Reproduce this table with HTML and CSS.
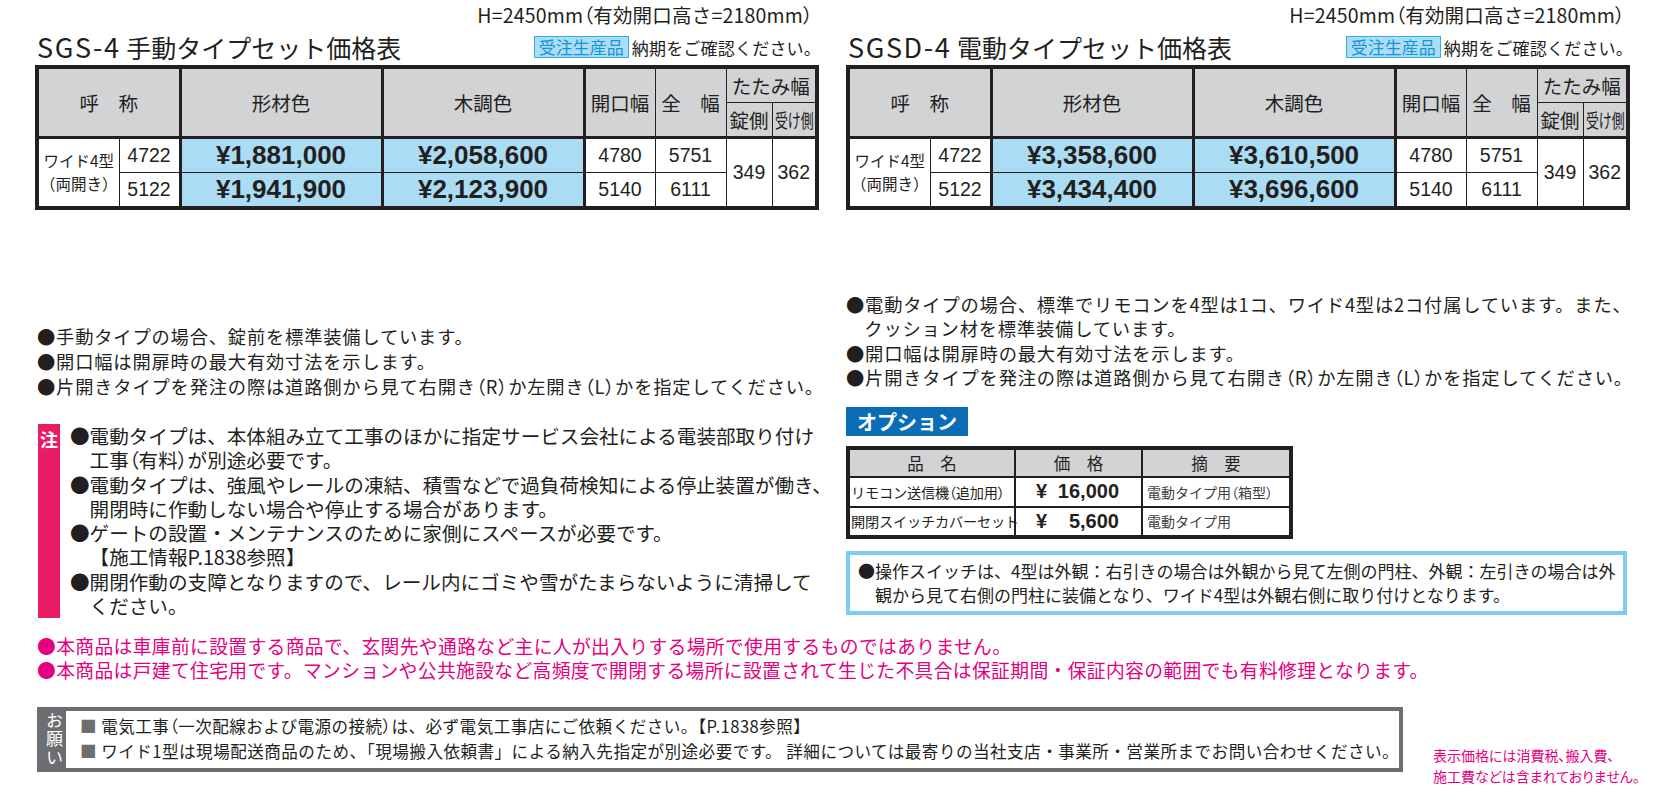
FILE: index.html
```html
<!DOCTYPE html>
<html lang="ja">
<head>
<meta charset="utf-8">
<title>SGS-4 / SGSD-4 セット価格表</title>
<link rel="stylesheet" href="styles.css">
</head>
<body>
<div class="page">
  <div class="cols">
    <section class="col">
      <div class="spec">H=2450mm<span class="pp">（</span>有効開口高さ=2180mm<span class="pp">）</span></div>
      <div class="titlerow">
        <h1 class="title"><span class="lat">SGS-4</span> 手動タイプセット価格表</h1>
        <div class="order"><span class="badge">受注生産品</span><span class="order-text">納期をご確認ください。</span></div>
      </div>
      <table class="price">
        <colgroup>
          <col class="c1"><col class="c2"><col class="c3"><col class="c4"><col class="c5"><col class="c6"><col class="c7"><col class="c8">
        </colgroup>
        <thead>
          <tr class="hr1">
            <th colspan="2" rowspan="2" class="sep">呼　称</th>
            <th rowspan="2" class="sep">形材色</th>
            <th rowspan="2" class="sep">木調色</th>
            <th rowspan="2">開口幅</th>
            <th rowspan="2">全　幅</th>
            <th colspan="2" class="sub">たたみ幅</th>
          </tr>
          <tr class="hr2">
            <th>錠側</th>
            <th><span class="squeeze">受け側</span></th>
          </tr>
        </thead>
        <tbody>
          <tr>
            <td rowspan="2" class="model">ワイド4型<br>（両開き）</td>
            <td class="num sep">4722</td>
            <td class="yen sep">¥1,881,000</td>
            <td class="yen sep">¥2,058,600</td>
            <td class="num">4780</td>
            <td class="num">5751</td>
            <td rowspan="2" class="num">349</td>
            <td rowspan="2" class="num">362</td>
          </tr>
          <tr>
            <td class="num sep">5122</td>
            <td class="yen sep">¥1,941,900</td>
            <td class="yen sep">¥2,123,900</td>
            <td class="num">5140</td>
            <td class="num">6111</td>
          </tr>
        </tbody>
      </table>

      <div class="notes notes-left">
        <p>●手動タイプの場合、錠前を標準装備しています。</p>
        <p>●開口幅は開扉時の最大有効寸法を示します。</p>
        <p>●片開きタイプを発注の際は道路側から見て右開き<span class="pp">（R）</span>か左開き<span class="pp">（L）</span>かを指定してください。</p>
      </div>

      <div class="caution">
        <div class="caution-mark">注</div>
        <div class="caution-body">
          <p>●電動タイプは、本体組み立て工事のほかに指定サービス会社による電装部取り付け<br>工事<span class="pp">（</span>有料<span class="pp">）</span>が別途必要です。</p>
          <p>●電動タイプは、強風やレールの凍結、積雪などで過負荷検知による停止装置が働き、<br>開閉時に作動しない場合や停止する場合があります。</p>
          <p>●ゲートの設置・メンテナンスのために家側にスペースが必要です。<br>【施工情報P.1838参照】</p>
          <p>●開閉作動の支障となりますので、レール内にゴミや雪がたまらないように清掃して<br>ください。</p>
        </div>
      </div>
    </section>

    <section class="col">
      <div class="spec">H=2450mm<span class="pp">（</span>有効開口高さ=2180mm<span class="pp">）</span></div>
      <div class="titlerow">
        <h1 class="title"><span class="lat">SGSD-4</span> 電動タイプセット価格表</h1>
        <div class="order"><span class="badge">受注生産品</span><span class="order-text">納期をご確認ください。</span></div>
      </div>
      <table class="price">
        <colgroup>
          <col class="c1"><col class="c2"><col class="c3"><col class="c4"><col class="c5"><col class="c6"><col class="c7"><col class="c8">
        </colgroup>
        <thead>
          <tr class="hr1">
            <th colspan="2" rowspan="2" class="sep">呼　称</th>
            <th rowspan="2" class="sep">形材色</th>
            <th rowspan="2" class="sep">木調色</th>
            <th rowspan="2">開口幅</th>
            <th rowspan="2">全　幅</th>
            <th colspan="2" class="sub">たたみ幅</th>
          </tr>
          <tr class="hr2">
            <th>錠側</th>
            <th><span class="squeeze">受け側</span></th>
          </tr>
        </thead>
        <tbody>
          <tr>
            <td rowspan="2" class="model">ワイド4型<br>（両開き）</td>
            <td class="num sep">4722</td>
            <td class="yen sep">¥3,358,600</td>
            <td class="yen sep">¥3,610,500</td>
            <td class="num">4780</td>
            <td class="num">5751</td>
            <td rowspan="2" class="num">349</td>
            <td rowspan="2" class="num">362</td>
          </tr>
          <tr>
            <td class="num sep">5122</td>
            <td class="yen sep">¥3,434,400</td>
            <td class="yen sep">¥3,696,600</td>
            <td class="num">5140</td>
            <td class="num">6111</td>
          </tr>
        </tbody>
      </table>

      <div class="notes notes-right">
        <p>●電動タイプの場合、標準でリモコンを4型は1コ、ワイド4型は2コ付属しています。また、<br>クッション材を標準装備しています。</p>
        <p>●開口幅は開扉時の最大有効寸法を示します。</p>
        <p>●片開きタイプを発注の際は道路側から見て右開き<span class="pp">（R）</span>か左開き<span class="pp">（L）</span>かを指定してください。</p>
      </div>

      <div class="opt-label">オプション</div>
      <table class="opt">
        <colgroup><col class="o1"><col class="o2"><col class="o3"></colgroup>
        <thead>
          <tr><th>品　名</th><th>価　格</th><th>摘　要</th></tr>
        </thead>
        <tbody>
          <tr>
            <td class="oname">リモコン送信機<span class="pp">（</span>追加用<span class="pp">）</span></td>
            <td><div class="oprice"><span>¥</span><span>16,000</span></div></td>
            <td class="onote">電動タイプ用<span class="pp">（</span>箱型<span class="pp">）</span></td>
          </tr>
          <tr>
            <td class="oname">開閉スイッチカバーセット</td>
            <td><div class="oprice"><span>¥</span><span>5,600</span></div></td>
            <td class="onote">電動タイプ用</td>
          </tr>
        </tbody>
      </table>

      <div class="bluenote">
        <p>●操作スイッチは、4型は外観：右引きの場合は外観から見て左側の門柱、外観：左引きの場合は外<br>観から見て右側の門柱に装備となり、ワイド4型は外観右側に取り付けとなります。</p>
      </div>
    </section>
  </div>

  <div class="bottom">
    <div class="pink">
      <p>●本商品は車庫前に設置する商品で、玄関先や通路など主に人が出入りする場所で使用するものではありません。</p>
      <p>●本商品は戸建て住宅用です。マンションや公共施設など高頻度で開閉する場所に設置されて生じた不具合は保証期間・保証内容の範囲でも有料修理となります。</p>
    </div>
    <div class="request-row">
      <div class="request">
        <div class="request-label">お願い</div>
        <div class="request-body">
          <p><span class="sq">■</span> 電気工事<span class="pp">（</span>一次配線および電源の接続<span class="pp">）</span>は、必ず電気工事店にご依頼ください。【P.1838参照】</p>
          <p><span class="sq">■</span> ワイド1型は現場配送商品のため、「現場搬入依頼書」による納入先指定が別途必要です。 詳細については最寄りの当社支店・事業所・営業所までお問い合わせください。</p>
        </div>
      </div>
      <div class="taxnote">表示価格には消費税、搬入費、<br>施工費などは含まれておりません。</div>
    </div>
  </div>
</div>
</body>
</html>
```

FILE: styles.css
```css
* { box-sizing: border-box; }
html, body { margin: 0; padding: 0; }
body {
  width: 1660px;
  height: 800px;
  overflow: hidden;
  background: #ffffff;
  color: #231f20;
  font-family: "Noto Sans CJK JP", "Noto Sans", sans-serif;
}
p { margin: 0; }

/* proportional (narrow) brackets, as in the printed typeface */
.pp { font-feature-settings: "palt" 1; }

.page { padding: 4px 0 0 35px; }

.cols {
  display: grid;
  grid-template-columns: 780px 781px;
  column-gap: 31px;
  align-items: start;
}
.col { display: flex; flex-direction: column; }

/* heading */
.spec {
  font-size: 19.5px;
  line-height: 22px;
  text-align: right;
  padding-right: 2px;
  white-space: nowrap;
  letter-spacing: 0.2px;
}
.titlerow {
  display: flex;
  justify-content: space-between;
  align-items: center;
  height: 34px;
  margin-top: 4px;
}
.title {
  margin: 0 0 0 2px;
  font-size: 25px;
  font-weight: 400;
  line-height: 34px;
  white-space: nowrap;
}
.title .lat { letter-spacing: 1.6px; font-size: 27px; }
.order { display: flex; align-items: center; white-space: nowrap; }
.badge {
  background: #a9def6;
  border: 1.5px solid #2eaee3;
  color: #1a93d2;
  font-size: 17px;
  line-height: 20px;
  padding: 0 4px;
}
.order-text { font-size: 17px; margin-left: 3px; letter-spacing: 0.2px; margin-right: -6px; }

/* price table */
.price {
  width: 100%;
  border-collapse: collapse;
  table-layout: fixed;
  border: 4px solid #231f20;
  margin-top: 1px;
}
.price .c1 { width: 82px; }
.price .c2 { width: 61px; }
.price .c3 { width: 202px; }
.price .c4 { width: 202px; }
.price .c5 { width: 71px; }
.price .c6 { width: 71px; }
.price .c7 { width: 46px; }
.price .c8 { width: 45px; }
.price th, .price td {
  border: 1px solid #231f20;
  padding: 0;
  text-align: center;
  vertical-align: middle;
  white-space: nowrap;
}
.price th {
  background: #d1d3d4;
  font-weight: 400;
  font-size: 19.5px;
  border-bottom: 3px solid #231f20;
}
.price th.sub { border-bottom-width: 1px; }
.price .sep { border-right: 3px solid #231f20; }
.price .hr1 { height: 35px; }
.price .hr2 { height: 35px; }
.price tbody tr { height: 35.5px; }
.squeeze {
  display: inline-block;
  transform: scaleX(0.66);
  margin: 0 -10px;
}
.price .model {
  font-size: 15.5px;
  line-height: 23px;
}
.price .num {
  font-family: "Liberation Sans", Arial, sans-serif;
  font-size: 19.5px;
}
.price .yen {
  background: #aadcf3;
  font-family: "Liberation Sans", Arial, sans-serif;
  font-weight: 700;
  font-size: 26px;
}

/* notes */
.notes { font-size: 18.3px; white-space: nowrap; letter-spacing: 0.8px; }
.notes p { padding-left: 1em; text-indent: -1em; }
.notes-left { margin-top: 114px; padding-left: 2px; line-height: 25px; }
.notes-right { margin-top: 82px; line-height: 24.4px; }

.caution { display: flex; margin-top: 25px; margin-left: 3px; }
.caution-mark {
  width: 22px;
  flex: 0 0 22px;
  background: #ea1b67;
  color: #ffffff;
  font-weight: 700;
  font-size: 18px;
  line-height: 24px;
  text-align: center;
  padding-top: 3px;
}
.caution-body {
  margin-left: 10px;
  font-size: 19.6px;
  line-height: 24.3px;
  white-space: nowrap;
}
.caution-body p { padding-left: 1em; text-indent: -1em; }

/* options */
.opt-label {
  align-self: flex-start;
  margin-top: 17px;
  height: 29px;
  line-height: 29px;
  padding: 0 11px;
  background: #0b6db6;
  color: #ffffff;
  font-weight: 700;
  font-size: 20px;
}
.opt {
  margin-top: 10px;
  width: 443px;
  border-collapse: collapse;
  table-layout: fixed;
  border: 4px solid #231f20;
}
.opt .o1 { width: 167px; }
.opt .o2 { width: 127px; }
.opt .o3 { width: 149px; }
.opt th, .opt td {
  border: 2px solid #231f20;
  padding: 0;
  white-space: nowrap;
  vertical-align: middle;
}
.opt thead tr { height: 29px; }
.opt tbody tr { height: 30px; }
.opt th {
  background: #d1d3d4;
  font-weight: 400;
  font-size: 16.5px;
  text-align: center;
}
.opt .oname { font-size: 14.2px; padding-left: 1px; letter-spacing: -0.2px; }
.opt .onote { font-size: 14px; color: #414042; padding-left: 4px; }
.oprice {
  display: flex;
  justify-content: space-between;
  padding: 0 22px 0 20px;
  font-family: "Liberation Sans", Arial, sans-serif;
  font-weight: 700;
  font-size: 20px;
}

.bluenote {
  margin-top: 12px;
  border: 4px solid #7ccdef;
  padding: 4px 6px 4px 8px;
  font-size: 17px;
  line-height: 24px;
  white-space: nowrap;
}
.bluenote p { padding-left: 1em; text-indent: -1em; }

/* bottom */
.bottom { margin-top: 16px; }
.pink {
  color: #e4007f;
  font-size: 18.8px;
  line-height: 24px;
  white-space: nowrap;
  padding-left: 2px;
  letter-spacing: 0.35px;
}
.request-row {
  display: flex;
  align-items: flex-start;
  margin-top: 25px;
  margin-left: 2px;
}
.request {
  display: flex;
  width: 1366px;
  height: 65px;
  border: 4px solid #6d6e71;
}
.request-label {
  flex: 0 0 25px;
  background: #6d6e71;
  color: #ffffff;
  font-size: 17px;
  line-height: 23px;
  writing-mode: vertical-rl;
  text-orientation: upright;
  white-space: nowrap;
  letter-spacing: 1.5px;
  text-align: center;
  padding: 0;
}
.request-body {
  padding: 3px 0 0 14px;
  font-size: 16.6px;
  line-height: 25px;
  white-space: nowrap;
  letter-spacing: 0.45px;
}
.sq { color: #6d6e71; }
.taxnote {
  margin-left: 30px;
  margin-top: 38px;
  color: #e4007f;
  font-size: 14px;
  line-height: 21px;
  white-space: nowrap;
  font-feature-settings: "palt" 1;
}
```
